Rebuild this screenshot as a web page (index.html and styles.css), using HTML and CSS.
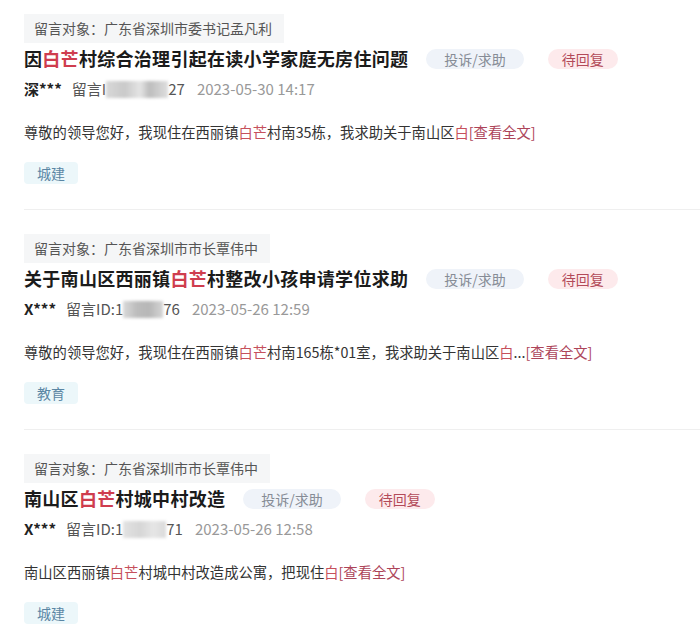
FILE: index.html
```html
<!DOCTYPE html>
<html lang="zh-CN">
<head>
<meta charset="utf-8">
<title>留言列表</title>
<link rel="stylesheet" href="styles.css">
</head>
<body>
<div class="list">
  <div class="item">
    <div class="target">留言对象：广东省深圳市委书记孟凡利</div>
    <div class="title-row">
      <span class="title">因<em>白芒</em>村综合治理引起在读小学家庭无房住问题</span>
      <span class="badge badge-type">投诉/求助</span>
      <span class="badge badge-status">待回复</span>
    </div>
    <div class="meta">
      <span class="user">深***</span>
      <span class="mid">留言I<span class="blur b1"></span>27</span>
      <span class="date">2023-05-30 14:17</span>
    </div>
    <p class="desc">尊敬的领导您好，我现住在西丽镇<em>白芒</em>村南35栋，我求助关于南山区<em>白</em><a class="more">[查看全文]</a></p>
    <div class="tags"><span class="cat">城建</span></div>
  </div>

  <div class="item">
    <div class="target">留言对象：广东省深圳市市长覃伟中</div>
    <div class="title-row">
      <span class="title">关于南山区西丽镇<em>白芒</em>村整改小孩申请学位求助</span>
      <span class="badge badge-type">投诉/求助</span>
      <span class="badge badge-status">待回复</span>
    </div>
    <div class="meta">
      <span class="user">X***</span>
      <span class="mid">留言ID:1<span class="blur b2"></span>76</span>
      <span class="date">2023-05-26 12:59</span>
    </div>
    <p class="desc">尊敬的领导您好，我现住在西丽镇<em>白芒</em>村南165栋*01室，我求助关于南山区<em>白</em>...<a class="more">[查看全文]</a></p>
    <div class="tags"><span class="cat">教育</span></div>
  </div>

  <div class="item">
    <div class="target">留言对象：广东省深圳市市长覃伟中</div>
    <div class="title-row">
      <span class="title">南山区<em>白芒</em>村城中村改造</span>
      <span class="badge badge-type">投诉/求助</span>
      <span class="badge badge-status">待回复</span>
    </div>
    <div class="meta">
      <span class="user">X***</span>
      <span class="mid">留言ID:1<span class="blur b3"></span>71</span>
      <span class="date">2023-05-26 12:58</span>
    </div>
    <p class="desc">南山区西丽镇<em>白芒</em>村城中村改造成公寓，把现住<em>白</em><a class="more">[查看全文]</a></p>
    <div class="tags"><span class="cat">城建</span></div>
  </div>
</div>
</body>
</html>
```
FILE: styles.css
```css
* { box-sizing: border-box; }
html, body { margin: 0; padding: 0; background: #fff; }
body {
  font-family: "Noto Sans CJK SC", "Noto Sans", sans-serif;
  color: #333;
  width: 700px;
  overflow: hidden;
}
em { font-style: normal; }
.list { padding-top: 14px; }
.item {
  margin-left: 24px;
  padding-bottom: 25px;
  margin-bottom: 24px;
  border-bottom: 1px solid #efefef;
}
.target {
  display: inline-block;
  height: 29px;
  line-height: 29px;
  padding: 0 12px 0 10px;
  background: #f5f6f7;
  color: #555;
  font-size: 14px;
}
.title-row {
  margin-top: 2px;
  height: 26px;
  display: flex;
  align-items: center;
}
.title {
  font-size: 18px;
  font-weight: 700;
  color: #1b1b1b;
  line-height: 26px;
  letter-spacing: 0.3px;
  margin-right: 18px;
}
.title em { color: #cf3d4e; }
.badge {
  height: 20px;
  line-height: 20px;
  font-size: 14px;
  border-radius: 10px;
  margin-top: 2px;
}
.badge-type {
  background: #eff3f9;
  color: #868c96;
  padding: 0 18px;
  margin-right: 24px;
}
.badge-status {
  background: #fdeaec;
  color: #b34a59;
  padding: 0 14px;
}
.meta {
  margin-top: 8px;
  height: 20px;
  line-height: 20px;
  font-size: 15px;
  display: flex;
  align-items: center;
}
.user { color: #222; font-weight: 700; margin-right: 10px; }
.mid { color: #555; margin-right: 12px; display: inline-flex; align-items: center; }
.blur {
  display: inline-block;
  height: 17px;
  filter: blur(1.5px);
}
.b1 { width: 62px; background: linear-gradient(90deg, #d8d8d8 0%, #c9c9c9 30%, #e4e4e4 55%, #bdbdbd 70%, #dedede 100%); }
.b2 { width: 40px; background: linear-gradient(90deg, #d9d9d9 0%, #bcbcbc 35%, #b7b7b7 65%, #d4d4d4 100%); }
.b3 { width: 43px; background: linear-gradient(90deg, #e2e2e2 0%, #d6d6d6 40%, #e6e6e6 70%, #dadada 100%); }
.date { color: #999; }
.desc {
  margin: 22px 0 0 0;
  height: 22px;
  line-height: 22px;
  font-size: 14.3px;
  color: #333;
}
.desc em { color: #c6505c; }
.more { color: #ad4459; }
.tags { margin-top: 19px; height: 22px; display: flex; }
.cat {
  height: 22px;
  line-height: 22px;
  padding: 0 13px;
  font-size: 14px;
  background: #ecf7fa;
  color: #5a86a4;
  border-radius: 4px;
}
```
